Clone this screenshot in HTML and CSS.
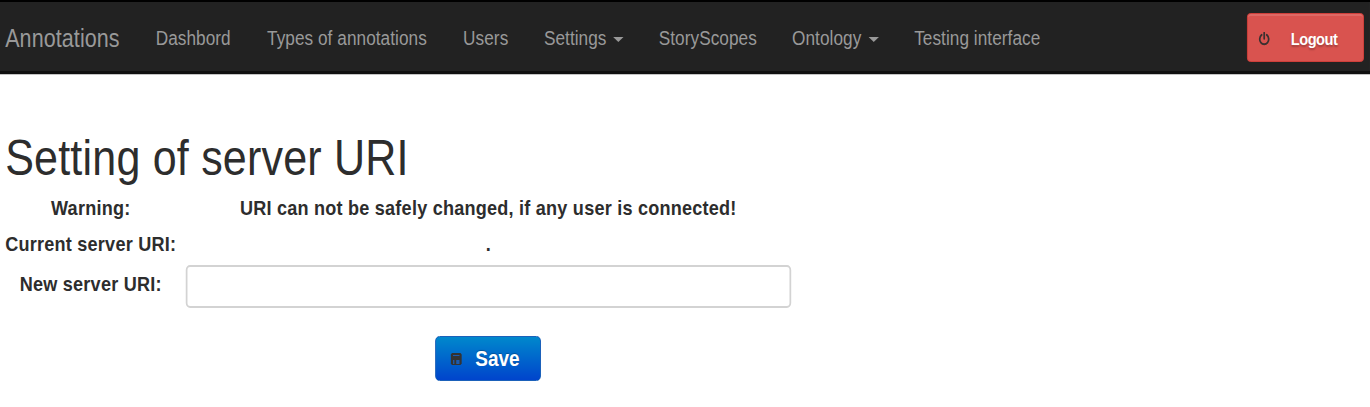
FILE: index.html
```html
<!DOCTYPE html>
<html lang="en">
<head>
<meta charset="utf-8">
<title>Annotations</title>
<link rel="stylesheet" href="styles.css">
</head>
<body>
<div class="frame">
<div class="page">
  <nav class="navbar">
    <a class="brand">Annotations</a>
    <a class="item dashboard">Dashbord</a>
    <a class="item types">Types of annotations</a>
    <a class="item users">Users</a>
    <a class="item settings">Settings<i class="caret"></i></a>
    <a class="item scopes">StoryScopes</a>
    <a class="item ontology">Ontology<i class="caret"></i></a>
    <a class="item testing">Testing interface</a>
    <button class="logout">
      <svg class="power" viewBox="0 0 14 14" preserveAspectRatio="none"><path d="M4 2.900a5.200 5.200 0 1 0 6 0M7 .8v6" fill="none" stroke="#3a3030" stroke-width="2" stroke-linecap="round"/></svg>
      <span>Logout</span>
    </button>
  </nav>
  <main class="content">
    <h1 class="title">Setting of server URI</h1>
    <form class="form">
      <div class="label">Warning:</div><div class="value warning">URI can not be safely changed, if any user is connected!</div>
      <div class="label">Current server URI:</div><div class="value">.</div>
      <label class="label new" for="uri">New server URI:</label><input class="input" id="uri" type="text">
      <button class="save" type="button">
        <svg class="disk" viewBox="0 0 12 12" preserveAspectRatio="none"><path d="M1.500 0h9L12 1.500v9L10.500 12h-9L0 10.500v-9z" fill="#333"/><path d="M2.500 2h7v1h-7zM2.600 7h1.400v4H2.600zM6 7h3.500v4H6z" fill="#1c5bb0"/></svg>
        <span>Save</span>
      </button>
    </form>
  </main>
</div>
</div>
</body>
</html>
```
FILE: styles.css
```css
* { box-sizing: border-box; }
body { margin: 0; background: #fff; font-family: "Liberation Sans", Arial, sans-serif; }

/* Condensed layout: everything is set wide and narrowed horizontally */
.frame { width: 100%; height: 407px; overflow: hidden; }
.page { width: 1593.02px; height: 407px; transform: scaleX(.86); transform-origin: 0 0; color: #2d2d2d; }

.navbar { display: flex; align-items: flex-start; height: 74px; padding: 0 7px 0 6px; background: #222; border-top: 2px solid #000; border-bottom: 3px solid #101010; box-shadow: 0 1px 0 #c4c4c4; color: #999; font-size: 20px; line-height: 24px; white-space: nowrap; }
.brand { width: 175px; padding-top: 24px; font-size: 25px; letter-spacing: .1px; }
.item { display: flex; align-items: center; padding-top: 24px; letter-spacing: .06px; }
.dashboard { width: 129.500px; }
.types { width: 228px; }
.users { width: 94px; }
.settings { width: 133.500px; }
.scopes { width: 155px; }
.ontology { width: 142px; }
.caret { margin: 2px 0 0 8px; border: 6px solid transparent; border-top: 5px solid #999; border-bottom: 0; }

.logout { display: flex; align-items: center; width: 136px; height: 49px; margin: 11px 0 0 auto; padding: 4px 0 0 12px; border: 1px solid #d43f3a; border-radius: 4px; background: #d9534f; box-shadow: inset 0 2px 0 rgba(255,255,255,.13); color: #fff; font: bold 17px "Liberation Sans", Arial, sans-serif; letter-spacing: -.6px; text-shadow: 0 2px 2px rgba(0,0,0,.25); }
.power { width: 14px; height: 14px; margin: 0 24px 2px 0; }

.content { padding: 52px 0 0 6px; }
.title { margin: 0; height: 65px; font-weight: 400; font-size: 50px; line-height: 64px; letter-spacing: .25px; white-space: nowrap; }
.form { display: grid; grid-template-columns: 199px 703.500px; grid-template-rows: 36px 36px 43px auto; column-gap: 11px; font-weight: bold; font-size: 21px; line-height: 34px; letter-spacing: .27px; text-align: center; white-space: nowrap; }
.new { padding-top: 4px; }
.input { height: 43px; margin-top: 2px; padding: 0 12px; border: 2px solid #d3d3d3; border-radius: 5px; font: inherit; }
.save { grid-column: 2; justify-self: center; display: flex; align-items: center; width: 123px; height: 45px; margin-top: 30px; padding: 1px 0 0 17px; border: 1px solid #0a55b5; border-radius: 5px; background: linear-gradient(#0088cc, #0044cc); color: #fff; font: bold 22px "Liberation Sans", Arial, sans-serif; text-shadow: 0 -1px 1px rgba(0,0,0,.25); }
.disk { width: 13px; height: 12px; margin-right: 15.500px; }
```
